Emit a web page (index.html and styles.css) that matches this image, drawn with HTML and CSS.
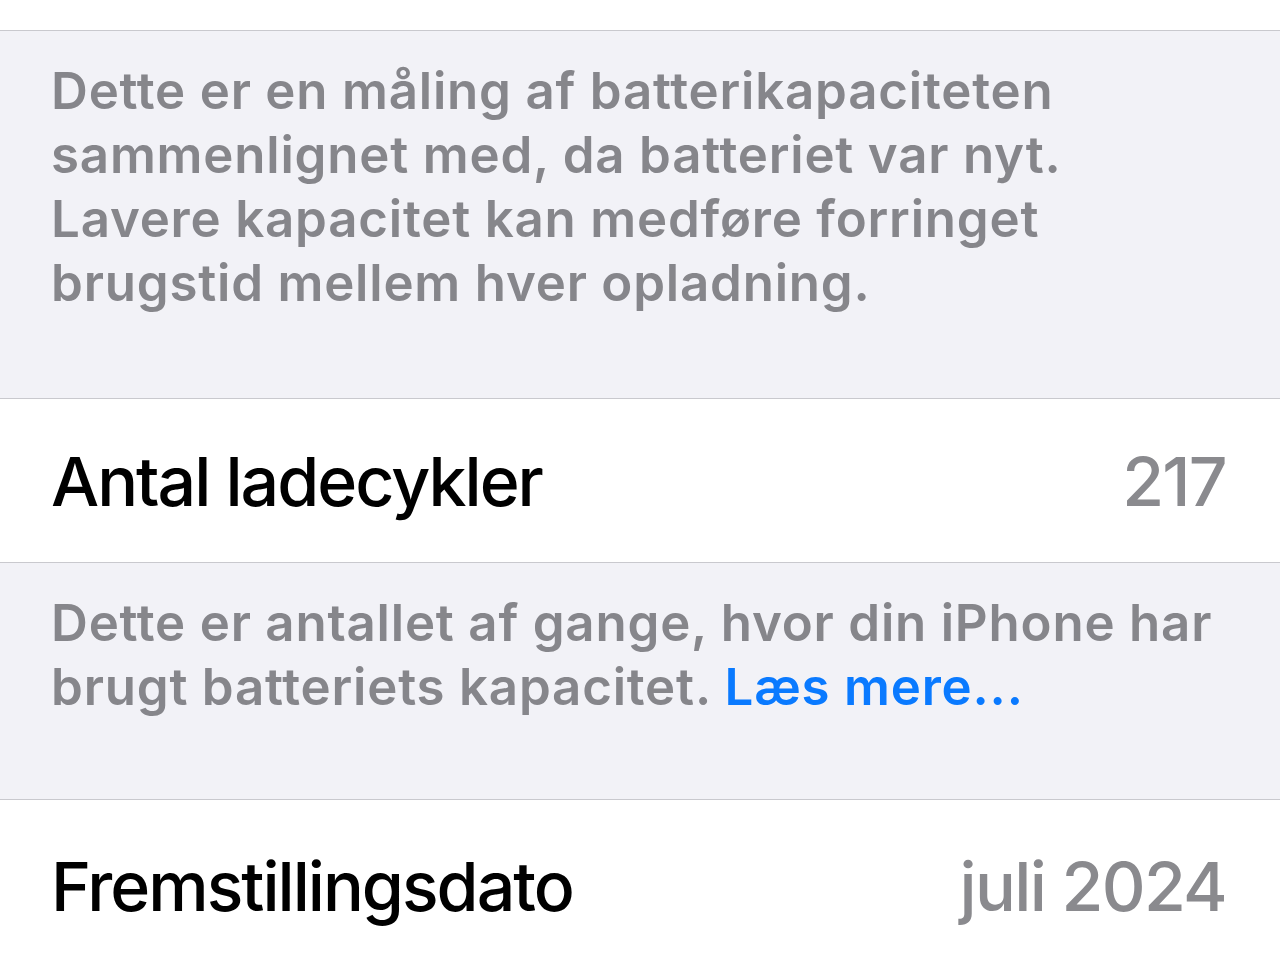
FILE: index.html
```html
<!DOCTYPE html>
<html lang="da">
<head>
<meta charset="utf-8">
<title>Batteritilstand</title>
<link rel="stylesheet" href="styles.css">
</head>
<body>
  <div class="group-end"></div>

  <p class="footer">Dette er en måling af batterikapaciteten<br>sammenlignet med, da batteriet var nyt.<br>Lavere kapacitet kan medføre forringet<br>brugstid mellem hver opladning.</p>

  <div class="row">
    <span class="label">Antal ladecykler</span>
    <span class="value">217</span>
  </div>

  <p class="footer footer-short">Dette er antallet af gange, hvor din iPhone har<br>brugt batteriets kapacitet. <a class="link" href="#">Læs mere...</a></p>

  <div class="row row-last">
    <span class="label">Fremstillingsdato</span>
    <span class="value">juli 2024</span>
  </div>
</body>
</html>
```

FILE: styles.css
```css
html, body {
  margin: 0;
  padding: 0;
  background: #ffffff;
  font-family: Inter, "Noto Sans", "Liberation Sans", sans-serif;
  -webkit-font-smoothing: antialiased;
}

body {
  width: 1280px;
  height: 960px;
  overflow: hidden;
}

/* bottom of the previous grouped cell */
.group-end {
  height: 30px;
  background: #ffffff;
  border-bottom: 1px solid #c9c9ce;
}

/* grey section footer text */
.footer {
  margin: 0;
  background: #f2f2f7;
  color: #86868b;
  font-size: 51px;
  line-height: 64px;
  font-weight: 600;
  letter-spacing: 0.8px;
  padding: 28px 54px 83px 51px;
  border-bottom: 1px solid #c9c9ce;
}

.footer-short {
  padding-top: 28px;
  padding-bottom: 80px;
}

.link {
  color: #0a7aff;
  text-decoration: none;
}

/* white list cell */
.row {
  height: 163px;
  display: flex;
  align-items: center;
  justify-content: space-between;
  padding: 0 54px 0 51px;
  background: #ffffff;
  border-bottom: 1px solid #c9c9ce;
}

.row-last {
  padding-top: 4px;
}

.label {
  color: #000000;
  font-size: 68px;
  font-weight: 500;
  letter-spacing: -2px;
}

.value {
  color: #8a8a8e;
  font-size: 68px;
  font-weight: 500;
  letter-spacing: -1.7px;
}
```
